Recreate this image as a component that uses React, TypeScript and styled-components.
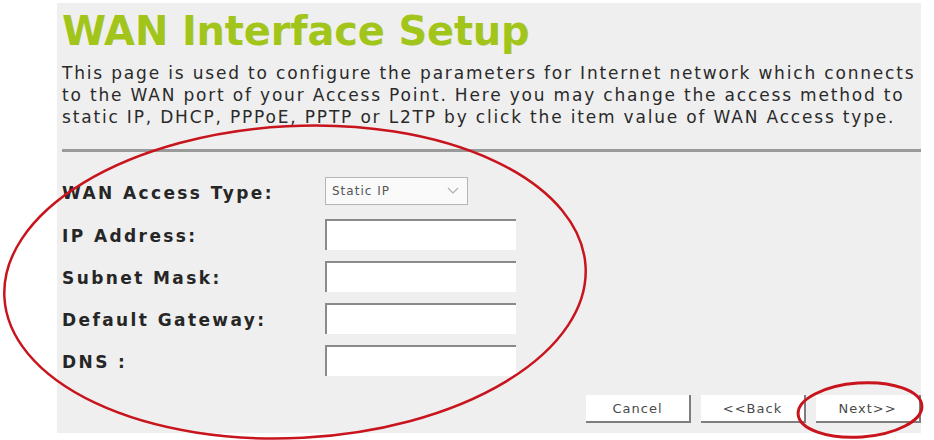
import { Fragment } from "react";
import styled, { createGlobalStyle } from "styled-components";

const GlobalStyle = createGlobalStyle`
  html, body {
    margin: 0;
    padding: 0;
    background: #ffffff;
  }
  body {
    font-family: "DejaVu Sans", Verdana, sans-serif;
  }
`;

const Page = styled.div`
  position: relative;
  width: 934px;
  height: 440px;
  box-sizing: border-box;
  padding: 3px 13px 7px 57px;
  overflow: hidden;
`;

const Panel = styled.div`
  height: 100%;
  background: #efefef;
  padding: 0 0 0 5px;
  box-sizing: border-box;
  display: flex;
  flex-direction: column;
`;

const Title = styled.h1`
  margin: 6px 0 0 0;
  font-size: 40px;
  line-height: 44px;
  font-weight: bold;
  color: #a2c51c;
  letter-spacing: -0.2px;
`;

const Description = styled.p`
  margin: 9px 0 0 0;
  font-size: 17px;
  line-height: 22px;
  color: #2a2a2a;
  letter-spacing: 1.82px;
  white-space: nowrap;
`;

const Rule = styled.hr`
  margin: 21px 0 0 0;
  border: none;
  height: 3px;
  background: #9a9a9a;
`;

const Form = styled.div`
  margin-top: 17px;
  display: grid;
  grid-template-columns: 263px auto;
  grid-template-rows: 44px;
  grid-auto-rows: 42px;
  align-items: center;
`;

const Label = styled.div`
  font-size: 17px;
  font-weight: bold;
  color: #262626;
  letter-spacing: 2.4px;
  padding-top: 3px;
`;

const SelectBox = styled.div`
  width: 143px;
  height: 28px;
  box-sizing: border-box;
  border: 1px solid #b5b5b5;
  background: #fafafa;
  display: flex;
  align-items: center;
  justify-content: space-between;
  padding: 0 8px 0 6px;
  font-size: 12px;
  letter-spacing: 1px;
  color: #555;
`;

const TextInput = styled.div`
  width: 191px;
  height: 31px;
  box-sizing: border-box;
  background: #ffffff;
  border-top: 2px solid #8a8a8a;
  border-left: 2px solid #8a8a8a;
`;

const Buttons = styled.div`
  margin-top: auto;
  margin-bottom: 10px;
  display: flex;
  justify-content: flex-end;
  gap: 10px;
`;

const Button = styled.button`
  width: 105px;
  height: 28px;
  box-sizing: border-box;
  background: #ffffff;
  border: none;
  border-right: 2px solid #7d7d7d;
  border-bottom: 2px solid #7d7d7d;
  font-family: "DejaVu Sans", Verdana, sans-serif;
  font-size: 13px;
  letter-spacing: 1px;
  color: #4a4a4a;
  padding: 0;
`;

const Annotations = styled.svg`
  position: absolute;
  left: 0;
  top: 0;
  pointer-events: none;
`;

const fields = ["IP Address:", "Subnet Mask:", "Default Gateway:", "DNS :"];

export default function App() {
  return (
    <>
      <GlobalStyle />
      <Page>
        <Panel>
          <Title>WAN Interface Setup</Title>
          <Description>
            This page is used to configure the parameters for Internet network which connects
            <br />
            to the WAN port of your Access Point. Here you may change the access method to
            <br />
            static IP, DHCP, PPPoE, PPTP or L2TP by click the item value of WAN Access type.
          </Description>
          <Rule />
          <Form>
            <Label>WAN Access Type:</Label>
            <SelectBox>
              <span>Static IP</span>
              <svg width="12" height="8" viewBox="0 0 12 8">
                <path d="M1 1 L6 6 L11 1" fill="none" stroke="#b0b0b0" strokeWidth="1.2" />
              </svg>
            </SelectBox>
            {fields.map((f) => (
              <Fragment key={f}>
                <Label>{f}</Label>
                <TextInput />
              </Fragment>
            ))}
          </Form>
          <Buttons>
            <Button>Cancel</Button>
            <Button>&lt;&lt;Back</Button>
            <Button>Next&gt;&gt;</Button>
          </Buttons>
        </Panel>
        <Annotations width="934" height="440" viewBox="0 0 934 440">
          <ellipse cx="295" cy="282" rx="291" ry="156" fill="none" stroke="#c8141c" strokeWidth="2.5" transform="rotate(-3 295 282)" />
          <ellipse cx="860" cy="410" rx="62" ry="27" fill="none" stroke="#c8141c" strokeWidth="3" transform="rotate(-4 860 410)" />
        </Annotations>
      </Page>
    </>
  );
}
